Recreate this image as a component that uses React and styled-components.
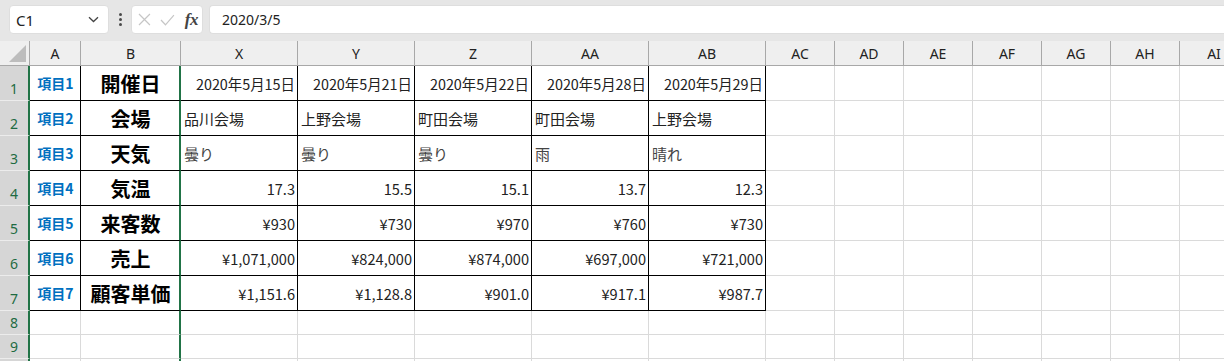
import React from 'react';
import styled, { createGlobalStyle } from 'styled-components';

const GlobalStyle = createGlobalStyle`
	html, body {
		margin: 0;
		padding: 0;
		background: #ffffff;
		overflow: hidden;
	}
	body {
		font-family: "Noto Sans CJK JP", "Noto Sans", sans-serif;
	}
`;

const Page = styled.div`
	width: 1224px;
	height: 361px;
	overflow: hidden;
	background: #ffffff;
`;

const FormulaBar = styled.div`
	display: flex;
	align-items: flex-start;
	height: 41px;
	box-sizing: border-box;
	padding: 5px 0 0 9px;
	background: #e6e6e6;
`;

const NameBox = styled.div`
	display: flex;
	align-items: center;
	justify-content: space-between;
	width: 100px;
	height: 29px;
	box-sizing: border-box;
	padding: 0 9px 0 6px;
	background: #ffffff;
	border: 1px solid #dedede;
	border-radius: 4px;
	font-family: "Noto Sans", sans-serif;
	font-size: 15px;
	color: #222;
`;

const Dots = styled.div`
	display: flex;
	flex-direction: column;
	justify-content: center;
	gap: 2px;
	width: 22px;
	height: 29px;
	align-items: center;

	span {
		width: 3px;
		height: 3px;
		border-radius: 50%;
		background: #4a4a4a;
	}
`;

const FuncBox = styled.div`
	display: flex;
	align-items: center;
	gap: 9px;
	width: 72px;
	height: 29px;
	box-sizing: border-box;
	padding: 0 4px 0 6px;
	background: #ffffff;
	border: 1px solid #dedede;
	border-radius: 4px;
`;

const Fx = styled.span`
	font-family: "Liberation Serif", serif;
	font-style: italic;
	font-weight: 700;
	font-size: 17px;
	color: #444;
	margin-left: 1px;
	letter-spacing: -0.5px;
`;

const FormulaInput = styled.div`
	flex: 1;
	display: flex;
	align-items: center;
	height: 29px;
	margin-left: 6px;
	box-sizing: border-box;
	padding-left: 12px;
	background: #ffffff;
	border: 1px solid #dedede;
	border-right: none;
	border-radius: 4px 0 0 4px;
	font-family: "Noto Sans", sans-serif;
	font-size: 14px;
	color: #222;
`;

const Sheet = styled.div`
	display: grid;
	grid-template-columns: 30px 51px 100px repeat(5, 117px) repeat(7, 69px);
	grid-template-rows: 25px repeat(7, 35px) repeat(3, 24px);
	width: 1249px;
`;

const Corner = styled.div`
	position: relative;
	background: #efefef;
	border-right: 1px solid #a8a8a8;
	border-bottom: 1px solid #a8a8a8;
	box-sizing: border-box;

	svg {
		position: absolute;
		right: 3px;
		bottom: 3px;
	}
`;

const ColHead = styled.div`
	display: flex;
	align-items: center;
	justify-content: center;
	box-sizing: border-box;
	background: #efefef;
	border-right: 1px solid #a8a8a8;
	border-bottom: 1px solid #a8a8a8;
	font-family: "Noto Sans", sans-serif;
	font-size: 14px;
	color: #222;
	padding-top: 1px;
`;

const RowHead = styled.div`
	display: flex;
	align-items: flex-end;
	justify-content: center;
	box-sizing: border-box;
	padding-bottom: 1px;
	background: #d6d6d6;
	border-right: 2px solid #217346;
	border-bottom: 1px solid #ececec;
	font-family: "Noto Sans", sans-serif;
	font-size: 14px;
	color: #1e6b42;
	line-height: 20px;
`;

const Cell = styled.div`
	display: flex;
	align-items: center;
	justify-content: ${p => p.$align === 'right' ? 'flex-end' : p.$align === 'center' ? 'center' : 'flex-start'};
	box-sizing: border-box;
	padding: 0 2px 0 3px;
	overflow: hidden;
	white-space: nowrap;
	border-right: ${p => p.$green ? '2px solid #217346' : `1px solid ${p.$line ? '#000000' : '#dadada'}`};
	border-bottom: 1px solid ${p => p.$line ? '#000000' : '#dadada'};
	font-size: ${p => p.$size || 15}px;
	font-weight: ${p => p.$bold ? 700 : 400};
	color: ${p => p.$color || '#222'};
`;

const columns = ['A', 'B', 'X', 'Y', 'Z', 'AA', 'AB', 'AC', 'AD', 'AE', 'AF', 'AG', 'AH', 'AI'];

const rows = [
	{ item: '項目1', label: '開催日', align: 'right', size: 14.4, values: ['2020年5月15日', '2020年5月21日', '2020年5月22日', '2020年5月28日', '2020年5月29日'] },
	{ item: '項目2', label: '会場', align: 'left', values: ['品川会場', '上野会場', '町田会場', '町田会場', '上野会場'] },
	{ item: '項目3', label: '天気', align: 'left', color: '#444', values: ['曇り', '曇り', '曇り', '雨', '晴れ'] },
	{ item: '項目4', label: '気温', align: 'right', size: 14.6, values: ['17.3', '15.5', '15.1', '13.7', '12.3'] },
	{ item: '項目5', label: '来客数', align: 'right', size: 14.6, values: ['¥930', '¥730', '¥970', '¥760', '¥730'] },
	{ item: '項目6', label: '売上', align: 'right', size: 14.6, values: ['¥1,071,000', '¥824,000', '¥874,000', '¥697,000', '¥721,000'] },
	{ item: '項目7', label: '顧客単価', align: 'right', size: 14.6, values: ['¥1,151.6', '¥1,128.8', '¥901.0', '¥917.1', '¥987.7'] },
];

const emptyTail = 7;

const Chevron = () => (
	<svg width="11" height="7" viewBox="0 0 11 7">
		<path d="M1 1.2 L5.5 5.5 L10 1.2" fill="none" stroke="#444" strokeWidth="1.3" />
	</svg>
);

const Cross = () => (
	<svg width="13" height="13" viewBox="0 0 13 13">
		<path d="M1 1 L12 12 M12 1 L1 12" fill="none" stroke="#c6c6c6" strokeWidth="1.2" />
	</svg>
);

const Check = () => (
	<svg width="15" height="12" viewBox="0 0 15 12">
		<path d="M1 6 L5.5 10.8 L14 1" fill="none" stroke="#c6c6c6" strokeWidth="1.2" />
	</svg>
);

const App = () => (
	<Page>
		<GlobalStyle />
		<FormulaBar>
			<NameBox>
				<span>C1</span>
				<Chevron />
			</NameBox>
			<Dots><span /><span /><span /></Dots>
			<FuncBox>
				<Cross />
				<Check />
				<Fx>fx</Fx>
			</FuncBox>
			<FormulaInput>2020/3/5</FormulaInput>
		</FormulaBar>
		<Sheet>
			<Corner>
				<svg width="17" height="17" viewBox="0 0 17 17">
					<path d="M17 0 L17 17 L0 17 Z" fill="#bdbdbd" />
				</svg>
			</Corner>
			{columns.map(c => <ColHead key={`col-${c}`}>{c}</ColHead>)}
			{rows.map((row, i) => (
				<React.Fragment key={`row-${i}`}>
					<RowHead>{i + 1}</RowHead>
					<Cell $line $align="center" $bold $size={14} $color="#0070c0">{row.item}</Cell>
					<Cell $line $green $align="center" $bold $size={20} $color="#000">{row.label}</Cell>
					{row.values.map((v, j) => (
						<Cell key={`v-${i}-${j}`} $line $align={row.align} $size={row.size} $color={row.color}>{v}</Cell>
					))}
					{Array.from({ length: emptyTail }).map((_, j) => <Cell key={`e-${i}-${j}`} />)}
				</React.Fragment>
			))}
			{[8, 9, 10].map(n => (
				<React.Fragment key={`row-${n}`}>
					<RowHead>{n < 10 ? n : ''}</RowHead>
					<Cell />
					<Cell $green />
					{Array.from({ length: 12 }).map((_, j) => <Cell key={`b-${n}-${j}`} />)}
				</React.Fragment>
			))}
		</Sheet>
	</Page>
);

export default App;
